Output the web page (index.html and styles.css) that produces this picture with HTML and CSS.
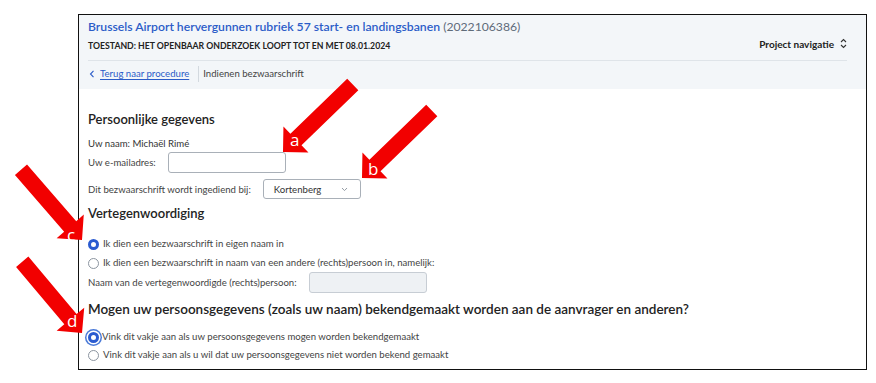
FILE: index.html
```html
<!DOCTYPE html>
<html lang="nl">
<head>
<meta charset="utf-8">
<title>Indienen bezwaarschrift</title>
<link rel="stylesheet" href="styles.css">
</head>
<body>
<div class="frame">
  <header class="hd">
    <div class="title"><span class="title-main">Brussels Airport hervergunnen rubriek 57 start- en landingsbanen</span> <span class="title-id">(2022106386)</span></div>
    <div class="status-row">
      <span class="status">TOESTAND: HET OPENBAAR ONDERZOEK LOOPT TOT EN MET 08.01.2024</span>
      <span class="projnav">Project navigatie
        <svg class="updown" width="7" height="11" viewBox="0 0 7 11"><path d="M1 4 L3.5 1.5 L6 4 M1 7 L3.5 9.5 L6 7" fill="none" stroke="#333" stroke-width="1.1"/></svg>
      </span>
    </div>
    <nav class="crumbs">
      <a class="back" href="#">
        <svg class="chev-left" width="6" height="8" viewBox="0 0 6 8"><path d="M4.5 0.8 L1.5 4 L4.5 7.2" fill="none" stroke="#2b5cc8" stroke-width="1.1"/></svg>
        <span class="back-link">Terug naar procedure</span>
      </a>
      <span class="crumb-sep"></span>
      <span class="crumb-cur">Indienen bezwaarschrift</span>
    </nav>
  </header>
  <main class="main">
    <h2 class="h h-first">Persoonlijke gegevens</h2>
    <p class="name">Uw naam: Michaël Rimé</p>
    <div class="field field-email">
      <span class="lbl">Uw e-mailadres:</span>
      <span class="input input-email"></span>
    </div>
    <div class="field field-select">
      <span class="lbl">Dit bezwaarschrift wordt ingediend bij:</span>
      <span class="select">Kortenberg
        <svg class="chev-down" width="7" height="5" viewBox="0 0 7 5"><path d="M1 1 L3.5 3.6 L6 1" fill="none" stroke="#8a929c" stroke-width="0.9"/></svg>
      </span>
    </div>
    <h2 class="h h-rep">Vertegenwoordiging</h2>
    <div class="radio radio-r1"><span class="dot dot-on"></span><span>Ik dien een bezwaarschrift in eigen naam in</span></div>
    <div class="radio radio-r2"><span class="dot"></span><span>Ik dien een bezwaarschrift in naam van een andere (rechts)persoon in, namelijk:</span></div>
    <div class="field field-rep">
      <span class="lbl">Naam van de vertegenwoordigde (rechts)persoon:</span>
      <span class="input input-disabled"></span>
    </div>
    <h2 class="h h-pub">Mogen uw persoonsgegevens (zoals uw naam) bekendgemaakt worden aan de aanvrager en anderen?</h2>
    <div class="radio radio-d1"><span class="dot dot-on dot-focus"></span><span class="txt-tight">Vink dit vakje aan als uw persoonsgegevens mogen worden bekendgemaakt</span></div>
    <div class="radio radio-d2"><span class="dot"></span><span>Vink dit vakje aan als u wil dat uw persoonsgegevens niet worden bekend gemaakt</span></div>
  </main>
</div>

<svg class="overlay" width="876" height="383" viewBox="0 0 876 383">
  <g fill="#f20000">
    <polygon transform="translate(283 152) rotate(136)" points="0,0 -18,-18 -18,-8 -97,-8 -97,8 -18,8 -18,18"/>
    <polygon transform="translate(362 178) rotate(136)" points="0,0 -18,-18 -18,-8 -97,-8 -97,8 -18,8 -18,18"/>
    <polygon transform="translate(82 240) rotate(49)" points="0,0 -18,-18 -18,-8 -93,-8 -93,8 -18,8 -18,18"/>
    <polygon transform="translate(82 333) rotate(50)" points="0,0 -18,-18 -18,-8 -93,-8 -93,8 -18,8 -18,18"/>
  </g>
  <g class="arrow-letters" fill="#fff">
    <text x="290" y="146">a</text>
    <text x="368" y="175">b</text>
    <text x="67" y="241">c</text>
    <text x="67" y="327">d</text>
  </g>
</svg>
</body>
</html>
```

FILE: styles.css
```css
* { box-sizing: border-box; }
html, body { margin: 0; padding: 0; background: #fff; }
body {
  font-family: Lato, "Noto Sans", sans-serif;
  color: #333332;
  font-size: 9.6px;
  position: relative;
  width: 876px;
  height: 383px;
  overflow: hidden;
}
.frame {
  margin: 14px 0 0 78px;
  width: 789px;
  height: 356px;
  border: 1px solid #111;
  overflow: hidden;
}
.hd {
  background: #f3f6f9;
  padding: 2px 19px 3px 9px;
}
.title {
  line-height: 20px;
  font-size: 12.2px;
  white-space: nowrap;
}
.title-main { color: #2b5cc8; font-weight: 600; }
.title-id { color: #5f6b79; }
.status-row {
  display: flex;
  justify-content: space-between;
  align-items: center;
  height: 16px;
}
.status { font-size: 8.7px; font-weight: 700; color: #222; }
.projnav {
  font-size: 10px;
  font-weight: 700;
  color: #222;
  display: flex;
  align-items: center;
  gap: 6px;
  margin-top: -3px;
}
.updown { display: block; }
.crumbs {
  margin-top: 7px;
  border-top: 1px solid #dfe4e9;
  height: 26px;
  display: flex;
  align-items: center;
}
.back {
  display: flex;
  align-items: center;
  gap: 5px;
  color: #2b5cc8;
  text-decoration: none;
  padding-left: 1px;
}
.chev-left { display: block; }
.back-link { text-decoration: underline; text-underline-offset: 2px; }
.crumb-sep {
  width: 1px;
  height: 16px;
  background: #d3d9df;
  margin: 0 4px 0 9px;
}
.crumb-cur { color: #444; }

.main { padding-left: 9px; }
.h {
  margin: 0;
  font-size: 13px;
  font-weight: 600;
  line-height: 20px;
  color: #222;
}
.h-first { margin-top: 20px; }
.name { margin: 7px 0 0; line-height: 16px; }
.field { display: flex; align-items: center; gap: 12px; }
.lbl { color: #444; }
.input {
  display: block;
  width: 118px;
  height: 21px;
  border: 1px solid #a9b0b8;
  border-radius: 3px;
  background: #fff;
}
.input-disabled { background: #eef1f4; border-color: #c7cdd4; }
.select {
  display: flex;
  align-items: center;
  justify-content: space-between;
  width: 98px;
  height: 20px;
  border: 1px solid #a9b0b8;
  border-radius: 3px;
  padding: 0 12px 0 10px;
  color: #333;
}
.chev-down { display: block; }
.field-select { margin-top: 6px; }
.h-rep { margin-top: 4px; }
.radio {
  display: flex;
  align-items: center;
  gap: 4px;
  line-height: 18px;
  height: 18px;
  color: #444;
}
.dot {
  width: 11px;
  height: 11px;
  border-radius: 50%;
  border: 1px solid #8c95a0;
  background: #fff;
  flex: none;
}
.dot-on { border: 3.5px solid #2a5bd0; }
.dot-focus { box-shadow: 0 0 0 1.5px #fff, 0 0 0 3px #4a7ad8; }
.txt-tight { margin-left: -1px; }
.radio-r1 { margin-top: 12px; }
.radio-r2 { margin-top: 1px; }
.h-pub { margin-top: 6px; font-size: 13.5px; }
.radio-d1 { margin-top: 9px; }

.overlay {
  position: absolute;
  left: 0;
  top: 0;
  pointer-events: none;
}
.arrow-letters {
  font-family: "Open Sans", sans-serif;
  font-size: 17px;
}
```
